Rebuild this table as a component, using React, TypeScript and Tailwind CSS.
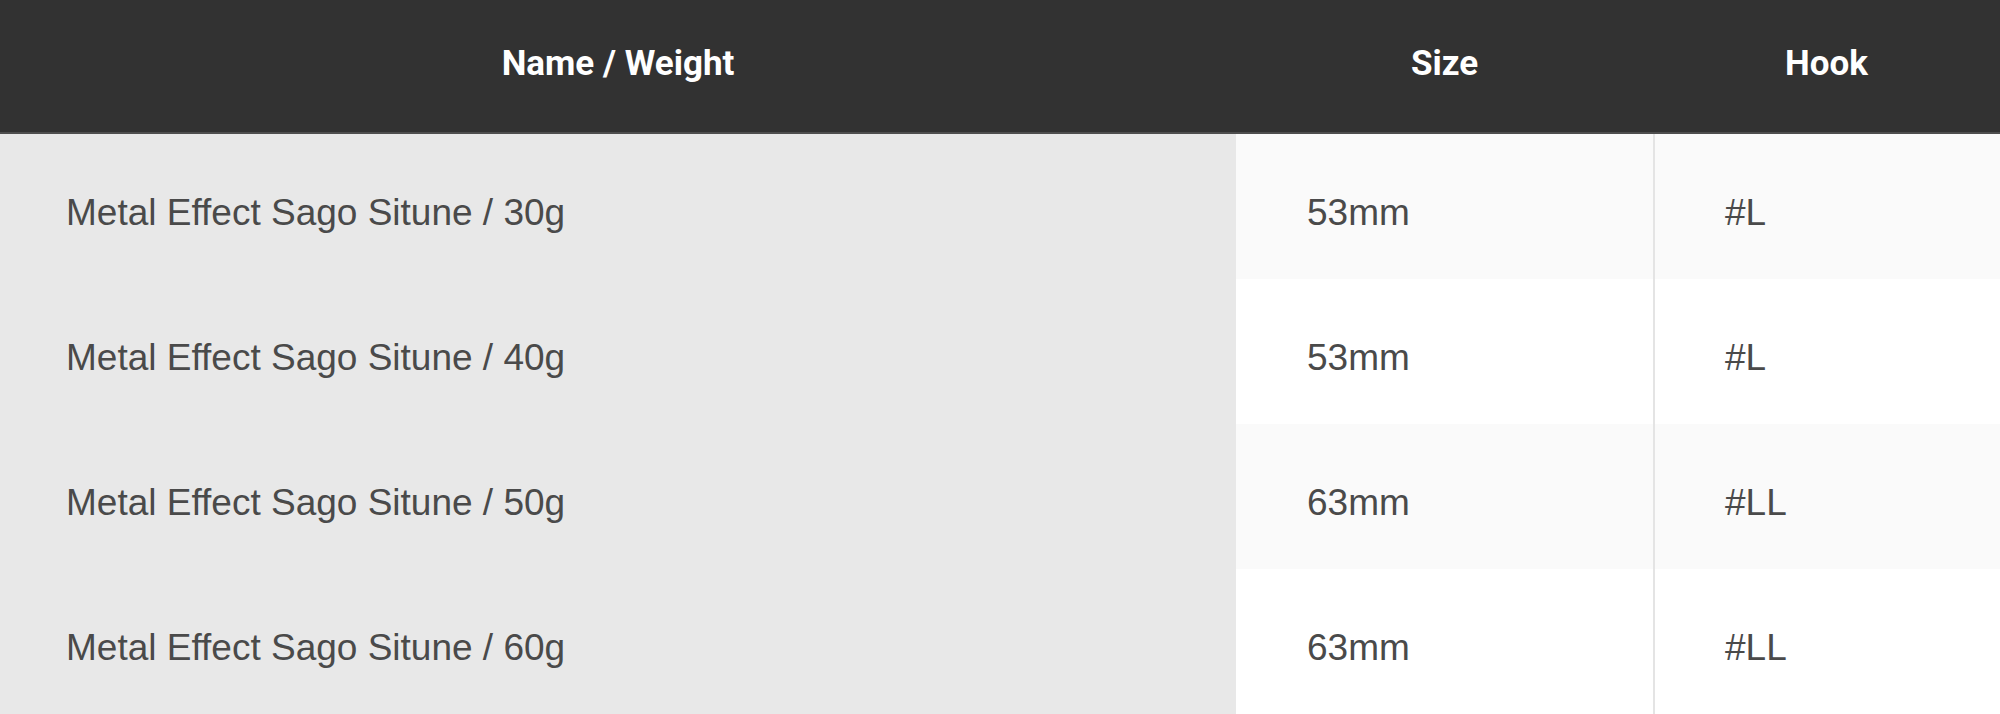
import React from 'react';

interface Row {
  name: string;
  size: string;
  hook: string;
}

const rows: Row[] = [
  { name: 'Metal Effect Sago Situne / 30g', size: '53mm', hook: '#L' },
  { name: 'Metal Effect Sago Situne / 40g', size: '53mm', hook: '#L' },
  { name: 'Metal Effect Sago Situne / 50g', size: '63mm', hook: '#LL' },
  { name: 'Metal Effect Sago Situne / 60g', size: '63mm', hook: '#LL' },
];

export default function App() {
  return (
    <div className="w-[2000px] h-[714px] bg-white overflow-hidden font-['Liberation_Sans',Arial,sans-serif]">
      <div className="grid grid-cols-[1236px_417px_1fr] h-[134px] bg-[#323232] border-b-2 border-[#4e4e4e] font-['Roboto',sans-serif] font-bold text-[35px] text-white">
        <div className="flex items-center justify-center pb-1">Name / Weight</div>
        <div className="flex items-center justify-center pb-1">Size</div>
        <div className="flex items-center justify-center pb-1">Hook</div>
      </div>
      {rows.map((row, i) => (
        <div
          key={i}
          className={`grid grid-cols-[1236px_417px_1fr] h-[145px] text-[37px] text-[#4a4a4a] ${
            i % 2 === 0 ? 'bg-[#fafafa]' : 'bg-white'
          }`}
        >
          <div className="flex items-center pl-[66px] pt-3 bg-[#e8e8e8]">{row.name}</div>
          <div className="flex items-center pl-[71px] pt-3">{row.size}</div>
          <div className="flex items-center pl-[70px] pt-3 border-l-2 border-[#e4e4e4]">{row.hook}</div>
        </div>
      ))}
    </div>
  );
}
